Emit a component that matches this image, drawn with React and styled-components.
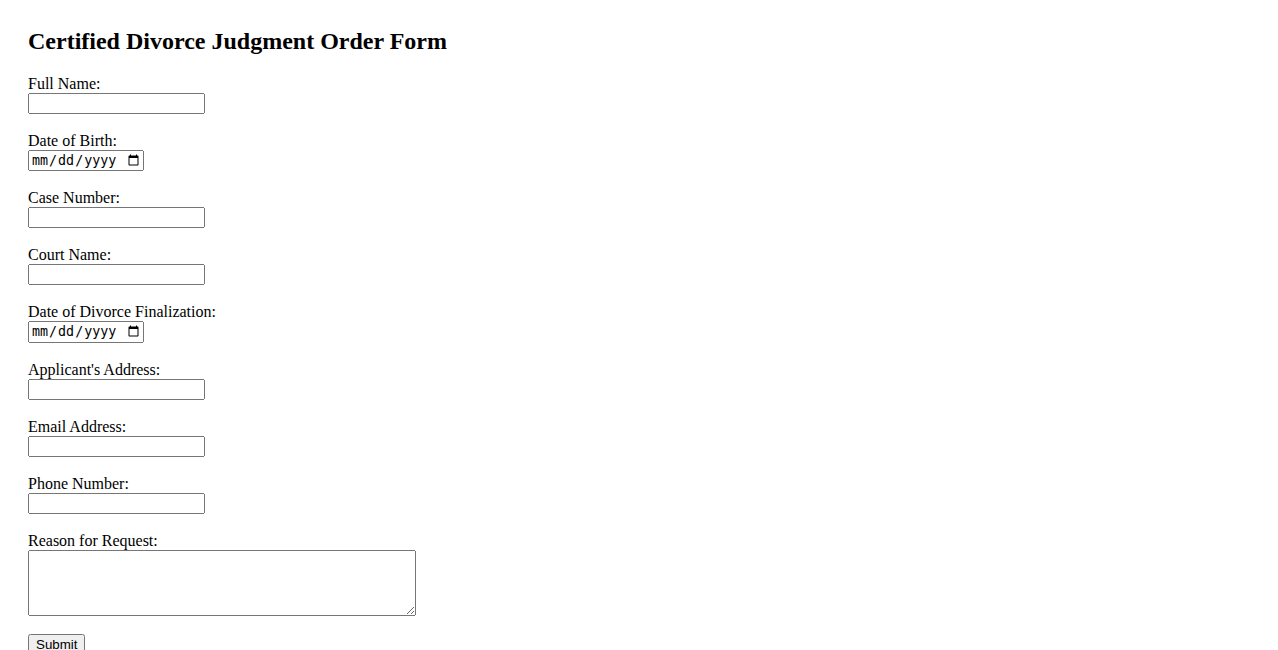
import React from "react";
import styled, { createGlobalStyle } from "styled-components";

const Global = createGlobalStyle`
  body {
    margin: 8px;
    padding: 20px;
    font-family: "Liberation Serif", "Times New Roman", serif;
    background: #fff;
    color: #000;
  }
`;

const Title = styled.h2`
  margin-top: 0;
`;

const Form = styled.form``;
const Label = styled.label``;
const Input = styled.input`
  box-sizing: border-box;
  width: ${p => (p.type === "date" ? "116px" : "177px")};
`;
const Area = styled.textarea`
  box-sizing: border-box;
  width: 388px;
  height: 66px;
  vertical-align: bottom;
`;
const Button = styled.button``;

const fields = [
  { id: "fullName", label: "Full Name:", type: "text" },
  { id: "dob", label: "Date of Birth:", type: "date" },
  { id: "caseNumber", label: "Case Number:", type: "text" },
  { id: "courtName", label: "Court Name:", type: "text" },
  { id: "divorceDate", label: "Date of Divorce Finalization:", type: "date" },
  { id: "address", label: "Applicant's Address:", type: "text" },
  { id: "email", label: "Email Address:", type: "email" },
  { id: "phone", label: "Phone Number:", type: "tel" }
];

export default () => (
  <>
    <Global />
    <Title>Certified Divorce Judgment Order Form</Title>
    <Form onSubmit={e => e.preventDefault()}>
      {fields.map(f => (
        <React.Fragment key={f.id}>
          <Label htmlFor={f.id}>{f.label}</Label>
          <br />
          <Input type={f.type} id={f.id} name={f.id} />
          <br />
          <br />
        </React.Fragment>
      ))}
      <Label htmlFor="reason">Reason for Request:</Label>
      <br />
      <Area id="reason" name="reason" rows={4} cols={50} />
      <br />
      <br />
      <Button type="submit">Submit</Button>
    </Form>
  </>
);
